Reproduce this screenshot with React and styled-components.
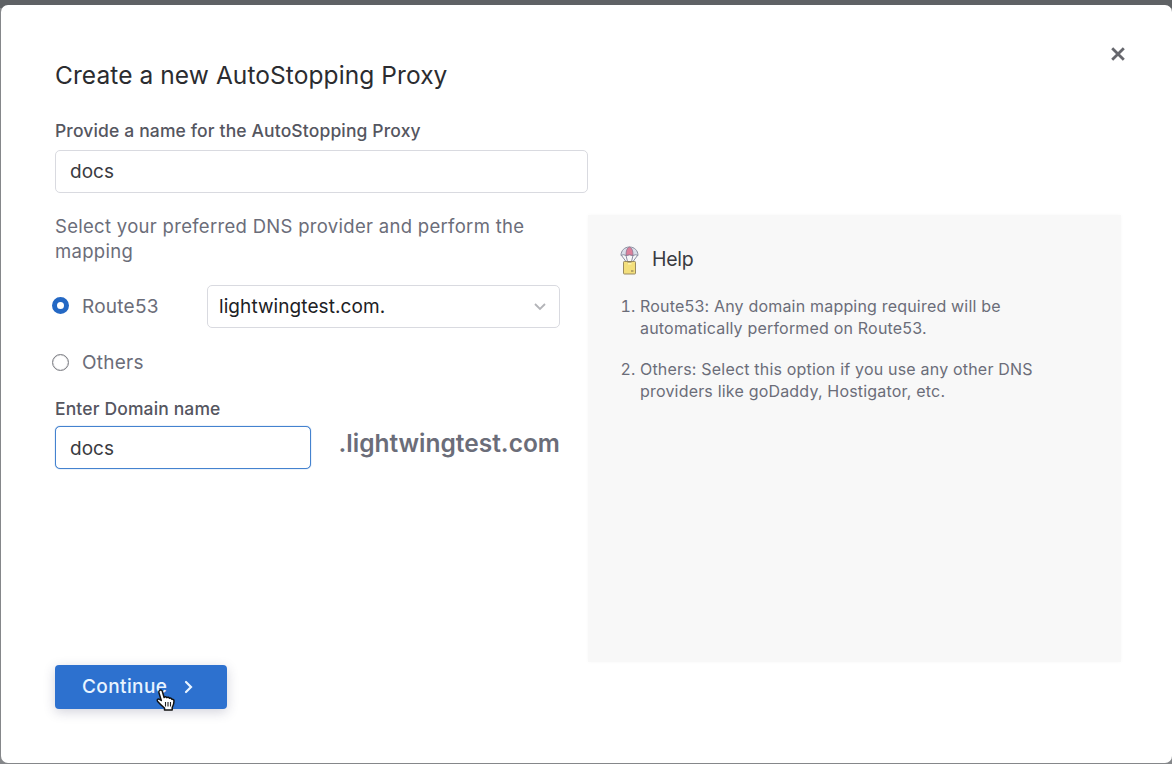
import React from "react";
import styled, { createGlobalStyle } from "styled-components";

const GlobalStyle = createGlobalStyle`
  * { box-sizing: border-box; }
  body { margin: 0; background: #5f6265; font-family: Inter, "Liberation Sans", sans-serif; }
`;

const Backdrop = styled.div`
  height: 764px;
  padding: 5px 0 1px 1px;
  background: #85878a;
  box-shadow: inset 0 8px 0 #5f6265;
  overflow: hidden;
`;

const Dialog = styled.main`
  position: relative;
  display: flex;
  height: 758px;
  padding: 0 51px 0 54px;
  background: #fff;
  border-radius: 7px;
`;

const CloseButton = styled.button`
  position: absolute;
  top: 41px;
  right: 46px;
  width: 16px;
  height: 16px;
  padding: 0;
  border: 0;
  background: none;
  svg { display: block; }
`;

const Form = styled.form`
  display: flex;
  flex-direction: column;
  align-items: flex-start;
  width: 533px;
  padding-top: 54px;
`;

const Title = styled.h1`
  margin: 0;
  font-size: 24.5px;
  font-weight: 400;
  line-height: 32px;
  letter-spacing: 0.08px;
  color: #2b2c30;
  white-space: nowrap;
`;

const Label = styled.label`
  margin-top: ${(p) => p.$top}px;
  font-size: 17.5px;
  font-weight: 500;
  line-height: 22px;
  letter-spacing: 0.14px;
  color: #55565f;
  white-space: nowrap;
`;

const Input = styled.input`
  width: ${(p) => p.$width}px;
  height: 43px;
  margin-top: ${(p) => p.$top || 0}px;
  padding: ${(p) => (p.$focused ? "2px 14px 0" : "0 14px")};
  border: ${(p) => (p.$focused ? "1px solid #4482cf" : "1px solid #d9dae0")};
  box-shadow: ${(p) => (p.$focused ? "0 0 1px #4482cf" : "none")};
  border-radius: 5px;
  outline: 0;
  background: #fff;
  font: 400 19px/24px Inter, "Liberation Sans", sans-serif;
  letter-spacing: 0;
  color: #3a3b41;
`;

const Hint = styled.p`
  width: 500px;
  margin: 21px 0 0;
  font-size: 18.5px;
  line-height: 25px;
  letter-spacing: 0.3px;
  color: #6b6d79;
`;

const Option = styled.div`
  display: flex;
  align-items: center;
  height: ${(p) => p.$height}px;
  margin-top: ${(p) => p.$top}px;
  margin-left: -3px;
`;

const Radio = styled.span`
  width: 17px;
  height: 17px;
  margin-bottom: 2px;
  border-radius: 50%;
  border: ${(p) => (p.$checked ? "5px solid #2468c4" : "1.5px solid #7d7e84")};
  box-shadow: ${(p) => (p.$checked ? "none" : "inset 0 0 1px #7d7e84")};
  background: #fff;
`;

const OptionText = styled.span`
  width: 125px;
  margin-left: 13px;
  font-size: 19px;
  line-height: 24px;
  letter-spacing: 0.25px;
  color: #6b6d79;
`;

const Select = styled.div`
  display: flex;
  align-items: center;
  justify-content: space-between;
  width: 353px;
  height: 43px;
  padding: 0 12px 0 11px;
  border: 1px solid #d9dae0;
  border-radius: 5px;
  font-size: 19px;
  letter-spacing: 0.08px;
  color: #202124;
`;

const DomainRow = styled.div`
  display: flex;
  align-items: flex-start;
  margin-top: 6px;
`;

const Suffix = styled.strong`
  margin: 2px 0 0 28px;
  font-size: 24.5px;
  font-weight: 600;
  line-height: 30px;
  letter-spacing: 0;
  color: #6b6d79;
  white-space: nowrap;
`;

const Continue = styled.button`
  position: relative;
  display: flex;
  align-items: center;
  gap: 17px;
  width: 172px;
  height: 44px;
  margin-top: 196px;
  padding: 0 0 0 27px;
  border: 0;
  border-radius: 4px;
  background: #2d71cf;
  box-shadow: 0 3px 12px rgba(50, 50, 90, 0.22);
  font: 500 19px/24px Inter, "Liberation Sans", sans-serif;
  letter-spacing: 0.4px;
  color: #e9f4ff;
`;

const Pointer = styled.svg`
  position: absolute;
  left: 100px;
  top: 23px;
`;

const Help = styled.aside`
  width: 533px;
  height: 447px;
  margin-top: 210px;
  padding: 28px 0 0 32px;
  background: #f8f8f8;
  box-shadow: 0 0 4px #f8f8f8;
`;

const HelpHeading = styled.h2`
  display: flex;
  align-items: center;
  gap: 13px;
  height: 32px;
  margin: 0;
  font-size: 19.5px;
  font-weight: 400;
  letter-spacing: -0.25px;
  color: #3a3b41;
  svg { margin-top: 3px; }
`;

const HelpList = styled.ol`
  margin: 21px 0 0;
  padding: 0 0 0 20px;
`;

const HelpItem = styled.li`
  margin-bottom: 20px;
  padding: 0;
  font-size: 16px;
  line-height: 21.5px;
  letter-spacing: 0.19px;
  color: #6b6d79;
  white-space: nowrap;
`;

function ParachuteIcon() {
  return (
    <svg width="19" height="30" viewBox="0 0 19 30" fill="none">
      <path d="M1 9.500C1 4.500 4.500 1 9.500 1S18 4.500 18 9.500l-2.500-.8-2.500.8-3.500-.8L6 9.500 3.500 8.700Z" fill="#d9dee9" stroke="#8b8e9f" />
      <path d="M6 9.500c0-5 1-7.500 3.500-8.500C12 2 13 4.500 13 9.500l-3.500-.8Z" fill="#dc7f9a" stroke="#8d7390" strokeWidth=".8" />
      <path d="M1.500 9.500 6 15.500M17.500 9.500 13 15.500M6 9.500l1.500 6M13 9.500l-1.500 6" stroke="#8b8fa5" />
      <rect x="3.500" y="15.500" width="12" height="12.500" rx=".8" fill="#f3df7c" stroke="#9a8b60" />
      <path d="M8 16h3.500v2.500H8Z" fill="#fff3ad" />
      <path d="M7.500 16h4M11 25h2.500" stroke="#7a6c4e" />
    </svg>
  );
}

export default function App() {
  return (
    <>
      <GlobalStyle />
      <Backdrop>
        <Dialog>
          <Form onSubmit={(e) => e.preventDefault()}>
            <Title>Create a new AutoStopping Proxy</Title>
            <Label $top={29}>Provide a name for the AutoStopping Proxy</Label>
            <Input $width={533} $top={8} defaultValue="docs" />
            <Hint>Select your preferred DNS provider and perform the mapping</Hint>
            <Option $top={21} $height={43}>
              <Radio $checked />
              <OptionText>Route53</OptionText>
              <Select>
                lightwingtest.com.
                <svg width="14" height="10" viewBox="0 0 14 10" fill="none">
                  <path d="m2 2 5 5 5-5" stroke="#b3b4b8" strokeWidth="1.800" />
                </svg>
              </Select>
            </Option>
            <Option $top={23} $height={24}>
              <Radio />
              <OptionText>Others</OptionText>
            </Option>
            <Label $top={23}>Enter Domain name</Label>
            <DomainRow>
              <Input $width={255.500} $focused defaultValue="docs" />
              <Suffix>.lightwingtest.com</Suffix>
            </DomainRow>
            <Continue type="button">
              Continue
              <svg width="10" height="14" viewBox="0 0 10 14" fill="none">
                <path d="m2 2 5 5-5 5" stroke="currentColor" strokeWidth="2.200" strokeLinecap="round" />
              </svg>
              <Pointer width="21" height="25" viewBox="0 0 21 25">
                <path
                  d="M4.500 2.500c1.200-1 2.500-.3 2.900 1l1.700 6c.8-1 2.200-.8 2.700.2.900-.8 2.200-.4 2.600.6 1-.6 2.200 0 2.500 1 1.300-.3 2.100.5 2.100 1.700 0 3.200-.8 4.500-1.800 6.500v2.500H9.500v-2C7 18 4.500 15.500 2.500 13.200c-1-1.500.7-2.700 2-1.900l1.800 1.200-2.400-7.900c-.2-.8 0-1.600.6-2.100Z"
                  fill="#fff"
                  stroke="#111"
                  strokeWidth="1.500"
                  strokeLinejoin="round"
                />
                <path d="M10.500 14v4.500M13 14v4.500M15.500 14v4.500" stroke="#222" strokeWidth="1.100" />
              </Pointer>
            </Continue>
          </Form>
          <Help>
            <HelpHeading>
              <ParachuteIcon />
              Help
            </HelpHeading>
            <HelpList>
              <HelpItem>
                Route53: Any domain mapping required will be
                <br />
                automatically performed on Route53.
              </HelpItem>
              <HelpItem>
                Others: Select this option if you use any other DNS
                <br />
                providers like goDaddy, Hostigator, etc.
              </HelpItem>
            </HelpList>
          </Help>
          <CloseButton aria-label="Close">
            <svg width="16" height="16" viewBox="0 0 16 16">
              <path d="m2.200 2.200 11.600 11.600M13.800 2.200 2.200 13.800" stroke="#66676d" strokeWidth="2.800" />
            </svg>
          </CloseButton>
        </Dialog>
      </Backdrop>
    </>
  );
}
